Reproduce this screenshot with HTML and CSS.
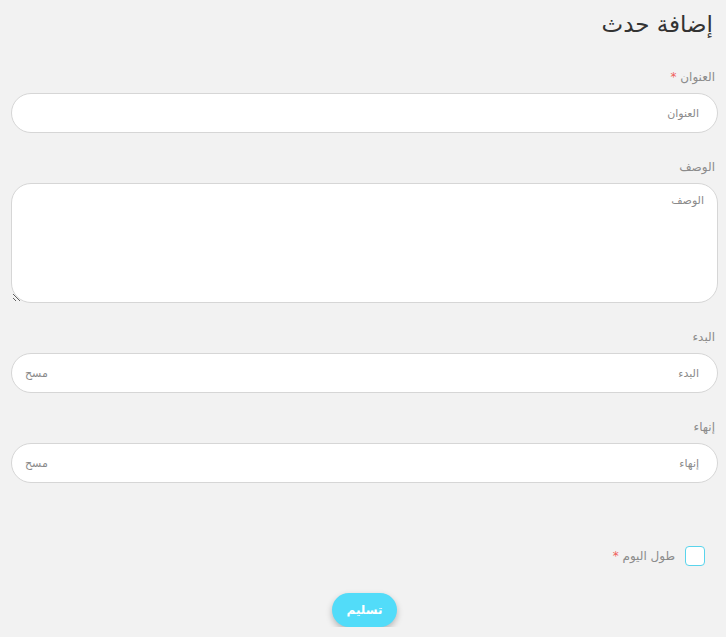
FILE: index.html
```html
<!DOCTYPE html>
<html lang="ar" dir="rtl">
<head>
  <meta charset="UTF-8" />
  <meta name="viewport" content="width=device-width, initial-scale=1.0"/>
  <title>إضافة حدث</title>
  <link rel="stylesheet" href="styles.css">
</head>
<body>
  <h2 class="page-title">إضافة حدث</h2>

  <form class="event-form">
    <div class="field">
      <label for="title">العنوان <span class="req">*</span></label>
      <input type="text" id="title" placeholder="العنوان">
    </div>

    <div class="field">
      <label for="desc">الوصف</label>
      <textarea id="desc" placeholder="الوصف"></textarea>
    </div>

    <div class="field">
      <label for="start">البدء</label>
      <div class="date-box">
        <input type="text" id="start" placeholder="البدء">
        <span class="clear-btn">مسح</span>
      </div>
    </div>

    <div class="field">
      <label for="end">إنهاء</label>
      <div class="date-box">
        <input type="text" id="end" placeholder="إنهاء">
        <span class="clear-btn">مسح</span>
      </div>
    </div>

    <div class="check-row">
      <input type="checkbox" id="allday" class="check">
      <label for="allday">طول اليوم <span class="req">*</span></label>
    </div>

    <div class="actions">
      <button type="button" class="submit-btn">تسليم</button>
    </div>
  </form>
</body>
</html>
```

FILE: styles.css
```css
/* Basic resets & layout */
body {
  margin: 0;
  padding: 0 8px 0 11px;
  font-family: 'DejaVu Sans', sans-serif;
  background: #f2f2f2;
  color: #333;
  box-sizing: border-box;
}

.page-title {
  font-size: 23px;
  font-weight: normal;
  line-height: 30px;
  margin: 9px 5px 29px 0;
  color: #333;
}

.field {
  margin-bottom: 25px;
}

.field label {
  display: block;
  font-size: 12px;
  line-height: 18px;
  color: #8c8c8c;
  margin: 0 3px 7px 0;
}

.req {
  color: #f0605a;
}

.field input,
.field textarea {
  display: block;
  width: 100%;
  box-sizing: border-box;
  height: 40px;
  border: 1px solid #d6d6d6;
  border-radius: 20px;
  background: #fff;
  padding: 0 18px;
  font-family: inherit;
  font-size: 11px;
  color: #555;
  outline: none;
}

.field textarea {
  height: 120px;
  padding: 10px 13px;
}

::placeholder {
  color: #8a8a8a;
}

.date-box {
  position: relative;
}

.clear-btn {
  position: absolute;
  left: 14px;
  top: 14px;
  font-size: 11px;
  color: #8a8a8a;
  cursor: pointer;
}

.check-row {
  display: flex;
  align-items: center;
  gap: 10px;
  margin: 63px 13px 0 0;
}

.check {
  -webkit-appearance: none;
  appearance: none;
  width: 20px;
  height: 20px;
  margin: 0;
  border: 1px solid #5ad4ec;
  border-radius: 4px;
  background: #fff;
}

.check-row label {
  font-size: 12px;
  color: #8c8c8c;
}

.actions {
  display: flex;
  justify-content: center;
  margin-top: 27px;
}

.submit-btn {
  background: #52dcf9;
  color: #fff;
  border: none;
  border-radius: 17px;
  height: 34px;
  padding: 0 15px;
  font-family: inherit;
  font-size: 12px;
  font-weight: bold;
  box-shadow: 0 3px 6px rgba(0, 0, 0, 0.25);
  cursor: pointer;
}
```
